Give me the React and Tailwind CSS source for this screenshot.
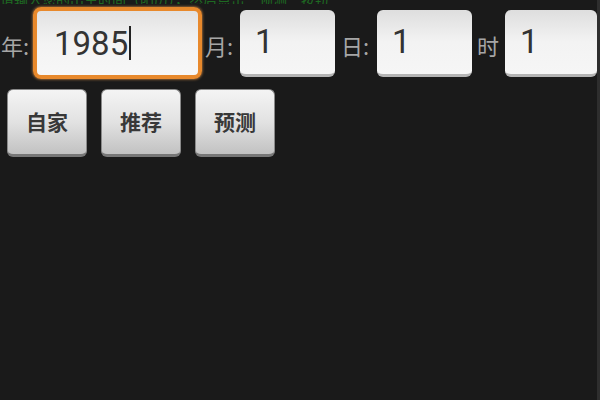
import React from 'react';

const cjk = { fontFamily: '"Noto Sans CJK SC", "Noto Sans", sans-serif' };
const num = { fontFamily: 'Roboto, "Noto Sans", sans-serif' };

function Label({ text, className }) {
  return (
    <div className={`shrink-0 text-[22px] leading-none text-[#a6a6a6] ${className}`} style={cjk}>
      {text}
    </div>
  );
}

function Field({ value, className }) {
  return (
    <div
      className={`shrink-0 h-[67px] rounded-[6px] bg-gradient-to-b from-[#dedede] via-[#f3f3f3] to-[#f6f6f6] border-b-[3px] border-[#b4b4b4] flex items-center pl-[15px] ${className}`}
    >
      <span className="text-[33px] leading-none text-[#333]" style={num}>{value}</span>
    </div>
  );
}

function Btn({ children }) {
  return (
    <button
      className="w-[80px] h-[68px] rounded-[6px] bg-gradient-to-b from-[#f4f4f4] via-[#e2e2e2] to-[#c2c2c2] border border-[#8a8a8a] border-b-[3px] border-b-[#777] text-[21px] font-bold text-[#383838] flex items-center justify-center"
      style={cjk}
    >
      {children}
    </button>
  );
}

export default function App() {
  return (
    <div className="w-[600px] h-[400px] bg-[#1a1a1a] flex overflow-hidden">
      <div className="flex-1 flex flex-col overflow-hidden">
        {/* status line, only its lower edge is on screen */}
        <div className="h-[4px] overflow-hidden flex items-end">
          <div className="text-[14px] leading-none text-[#1e6a22] whitespace-nowrap -mb-[2px]" style={cjk}>
            请输入您的出生时间（阳历），然后点击“预测”按钮
          </div>
        </div>

        <div className="flex items-center mt-[3px] h-[72px]">
          <Label text="年:" className="w-[33px] pl-[1px] pt-[3px]" />
          <div className="shrink-0 w-[169px] h-[72px] rounded-[8px] border-[4px] border-[#e8892c] shadow-[0_0_3px_#f0a050] bg-gradient-to-b from-[#e2e2e2] via-[#f3f3f3] to-[#f7f7f7] flex items-center pl-[17px]">
            <span className="text-[33px] leading-none text-[#333]" style={num}>1985</span>
            <span className="w-[2px] h-[34px] bg-[#222] ml-[1px]" />
          </div>
          <Label text="月:" className="w-[38px] pl-[3px] pt-[3px]" />
          <Field value="1" className="w-[95px]" />
          <Label text="日:" className="w-[42px] pl-[6px] pt-[3px]" />
          <Field value="1" className="w-[95px]" />
          <Label text="时" className="w-[33px] pl-[5px] pt-[3px]" />
          <Field value="1" className="w-[92px]" />
        </div>

        <div className="flex gap-[14px] pl-[7px] mt-[10px]">
          <Btn>自家</Btn>
          <Btn>推荐</Btn>
          <Btn>预测</Btn>
        </div>
      </div>
      <div className="w-[3px] bg-[#2e2e2e]" />
    </div>
  );
}
